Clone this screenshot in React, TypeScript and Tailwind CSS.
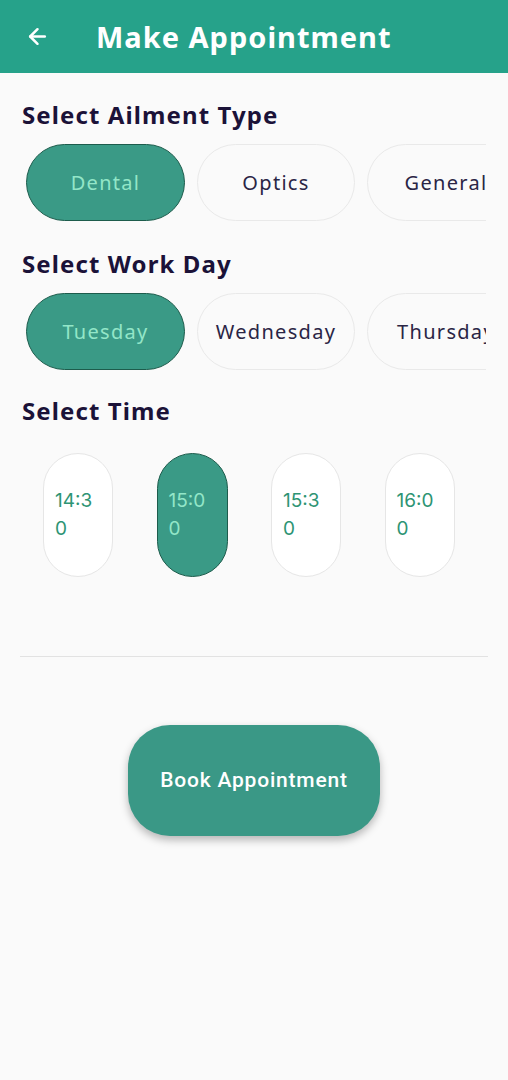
import { ArrowLeft } from "lucide-react";

const ailments = ["Dental", "Optics", "General"];
const days = ["Tuesday", "Wednesday", "Thursday"];
const times = ["14:30", "15:00", "15:30", "16:00"];

function ChipRow({ items, selected }: { items: string[]; selected: string }) {
  return (
    <div className="mt-[14px] mr-[22px] ml-[26px] flex gap-[12px] overflow-hidden">
      {items.map((item) => {
        const active = item === selected;
        return (
          <div
            key={item}
            className={
              active
                ? "flex h-[77px] w-[159px] shrink-0 items-center justify-center rounded-full border border-[#1d5c4c] bg-[#3a9a86] font-['Noto_Sans',sans-serif] text-[20px] tracking-[1.3px] text-[#93e6c8]"
                : "flex h-[77px] w-[158px] shrink-0 items-center justify-center rounded-full border border-[#e9e9e9] bg-[#fafafa] font-['Noto_Sans',sans-serif] text-[20px] tracking-[1.3px] text-[#2a2545]"
            }
          >
            <span className="whitespace-nowrap">{item}</span>
          </div>
        );
      })}
    </div>
  );
}

function SectionTitle({ children, className }: { children: string; className?: string }) {
  return (
    <h2
      className={
        "ml-[22px] font-['Noto_Sans',sans-serif] text-[24px] leading-[30px] font-bold tracking-[1.1px] text-[#1b1238] " +
        (className ?? "")
      }
    >
      {children}
    </h2>
  );
}

export default function App() {
  return (
    <div className="min-h-[1080px] w-[508px] bg-[#fafafa]">
      <header className="flex h-[73px] items-center bg-[#26a28a] text-white">
        <ArrowLeft className="ml-[25px] h-[25px] w-[25px]" strokeWidth={2.4} />
        <h1 className="ml-[46px] font-['Noto_Sans',sans-serif] text-[29px] font-bold tracking-[1px]">
          Make Appointment
        </h1>
      </header>

      <SectionTitle className="mt-[27px]">Select Ailment Type</SectionTitle>
      <ChipRow items={ailments} selected="Dental" />

      <SectionTitle className="mt-[28px]">Select Work Day</SectionTitle>
      <ChipRow items={days} selected="Tuesday" />

      <SectionTitle className="mt-[26px]">Select Time</SectionTitle>
      <div className="mt-[27px] ml-[43px] flex gap-[43.5px]">
        {times.map((t) => {
          const active = t === "15:00";
          return (
            <div
              key={t}
              className={
                active
                  ? "flex h-[124px] w-[71px] items-center rounded-full border border-[#1d5c4c] bg-[#3a9a86] pl-[11px] font-['Inter',sans-serif] text-[19px] leading-[28px] text-[#93e6c8]"
                  : "flex h-[124px] w-[70px] items-center rounded-full border border-[#e6e6e6] bg-white pl-[11px] font-['Inter',sans-serif] text-[19px] leading-[28px] text-[#2e9474]"
              }
            >
              <span className="w-[42px] break-all">{t}</span>
            </div>
          );
        })}
      </div>

      <div className="mx-[20px] mt-[79px] h-px bg-[#e2e2e2]" />

      <div className="mt-[68px] flex justify-center">
        <button className="h-[111px] w-[252px] rounded-[42px] bg-[#3a9886] font-['Roboto',sans-serif] text-[21px] font-medium tracking-[0.8px] text-white shadow-[0_4px_8px_rgba(0,0,0,0.28)]">
          Book Appointment
        </button>
      </div>
    </div>
  );
}
